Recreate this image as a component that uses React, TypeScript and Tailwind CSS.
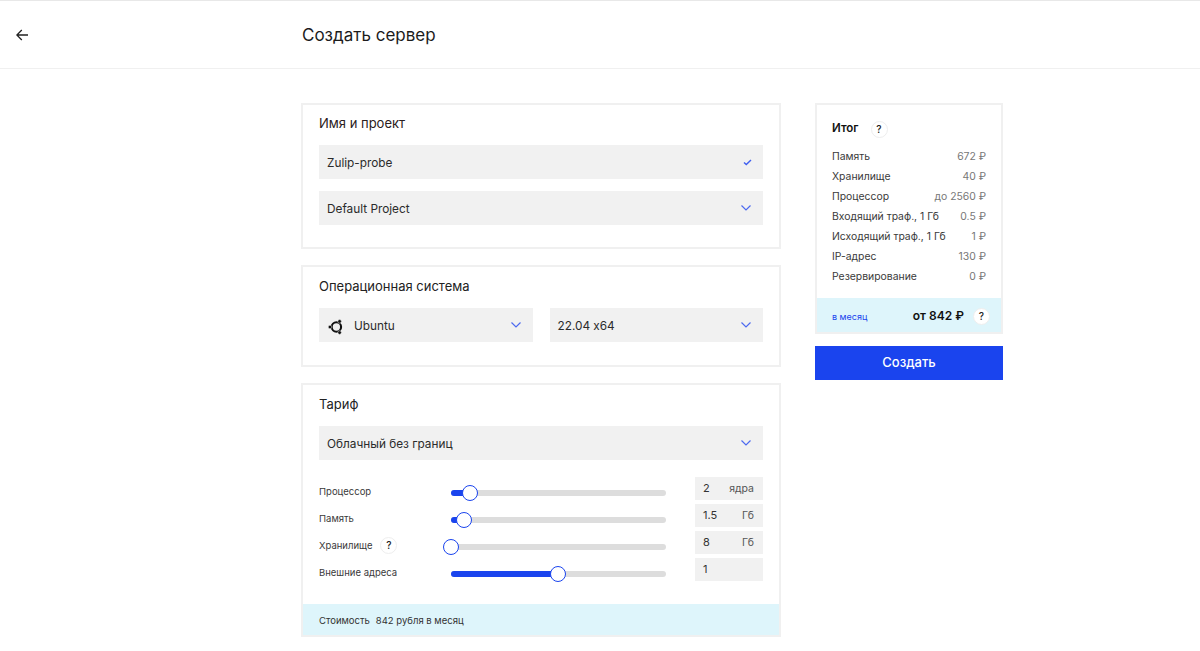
import React from "react";

const Chevron = () => (
  <svg width="12" height="8" viewBox="0 0 12 8" fill="none" className="shrink-0">
    <path d="M1.5 1.5 6 6l4.5-4.5" stroke="#4d6af0" strokeWidth="1.2" />
  </svg>
);

const Check = () => (
  <svg width="9" height="7" viewBox="0 0 9 7" fill="none" className="shrink-0">
    <path d="M1 3.4 3.3 5.6 8 1" stroke="#3f5ff0" strokeWidth="1.4" />
  </svg>
);

const Ubuntu = () => (
  <svg width="16" height="16" viewBox="0 0 16 16" fill="none" className="shrink-0">
    <circle cx="9.4" cy="8" r="4.7" stroke="#111" strokeWidth="2.1" />
    <circle cx="3" cy="8" r="1.8" fill="#111" stroke="#f1f1f1" strokeWidth="0.5" />
    <circle cx="12.6" cy="2.4" r="1.8" fill="#111" stroke="#f1f1f1" strokeWidth="0.5" />
    <circle cx="12.6" cy="13.6" r="1.8" fill="#111" stroke="#f1f1f1" strokeWidth="0.5" />
  </svg>
);

const Help = ({ white }: { white?: boolean }) => (
  <span className={`flex h-[17px] w-[17px] shrink-0 items-center justify-center rounded-full border border-[#eeeeee] text-[10px] font-medium text-[#222] ${white ? "bg-white" : ""}`}>
    ?
  </span>
);

const Select = ({ children, icon }: { children: React.ReactNode; icon?: React.ReactNode }) => (
  <div className="flex h-[34px] items-center justify-between bg-[#f1f1f1] pl-[8px] pr-[11px] text-[11.8px] text-[#2b2b2b] [font-feature-settings:'calt'_0]">
    <div className="flex items-center pt-[3px]">{children}</div>
    {icon ?? <Chevron />}
  </div>
);

const Card = ({ className, children }: { className?: string; children: React.ReactNode }) => (
  <section className={`border-2 border-[#f0f0f0] ${className ?? ""}`}>{children}</section>
);

const sliders = [
  { label: "Процессор", pos: 19, value: "2", unit: "ядра" },
  { label: "Память", pos: 13, value: "1.5", unit: "Гб" },
  { label: "Хранилище", pos: 0, value: "8", unit: "Гб", help: true },
  { label: "Внешние адреса", pos: 107, value: "1", unit: "" },
];

const totals = [
  ["Память", "672 ₽"],
  ["Хранилище", "40 ₽"],
  ["Процессор", "до 2560 ₽"],
  ["Входящий траф., 1 Гб", "0.5 ₽"],
  ["Исходящий траф., 1 Гб", "1 ₽"],
  ["IP-адрес", "130 ₽"],
  ["Резервирование", "0 ₽"],
];

export default function App() {
  return (
    <div className="h-[651px] overflow-hidden bg-white font-['Inter',sans-serif] text-[#222]">
      <header className="flex h-[69px] items-center border-y border-t-[#e8e8e8] border-b-[#f0f0f0] pl-[16px] pt-[1px]">
        <svg width="12" height="12" viewBox="0 0 12 12" fill="none" className="shrink-0">
          <path d="M12 6H1M5.8 1 .8 6l5 5" stroke="#222" strokeWidth="1.3" />
        </svg>
        <h1 className="ml-[274px] text-[17px] font-normal leading-none text-[#1c1c1c]">Создать сервер</h1>
      </header>

      <main className="flex items-start gap-[34px] pl-[301px] pt-[34px]">
        <div className="flex w-[480px] flex-col gap-[16px]">
          <Card className="h-[146px] px-[16px] pt-[10px]">
            <h2 className="h-[16px] text-[13px] font-normal leading-[16px] text-[#2a2020]">Имя и проект</h2>
            <div className="mt-[14px] flex flex-col gap-[12px]">
              <Select icon={<Check />}>Zulip-probe</Select>
              <Select>Default Project</Select>
            </div>
          </Card>

          <Card className="h-[102px] px-[16px] pt-[11px]">
            <h2 className="h-[16px] text-[13px] font-normal leading-[16px] text-[#222]">Операционная система</h2>
            <div className="mt-[14px] grid grid-cols-2 gap-[17px]">
              <Select>
                <Ubuntu />
                <span className="ml-[11px]">Ubuntu</span>
              </Select>
              <Select>22.04 x64</Select>
            </div>
          </Card>

          <Card className="h-[254px]">
            <div className="px-[16px] pt-[11px]">
              <h2 className="h-[16px] text-[13px] font-normal leading-[16px] text-[#222]">Тариф</h2>
              <div className="mt-[14px]">
                <Select>Облачный без границ</Select>
              </div>
              <div className="mt-[17px] flex flex-col gap-[4px]">
                {sliders.map((s) => (
                  <div key={s.label} className="flex h-[23px] items-center">
                    <div className="flex w-[132px] items-center gap-[8px] pt-[5.5px] text-[9.5px] leading-none text-[#3a3a3a]">
                      <span>{s.label}</span>
                      {s.help && <Help />}
                    </div>
                    <div className="relative mt-[8px] h-[6px] w-[215px] rounded-full bg-[#dddddd]">
                      <div className="h-full rounded-full bg-[#1a44ee]" style={{ width: s.pos }} />
                      <div
                        className="absolute top-1/2 h-[16px] w-[16px] -translate-x-1/2 -translate-y-1/2 rounded-full border-[1.5px] border-[#1a44ee] bg-white"
                        style={{ left: s.pos }}
                      />
                    </div>
                    <div className="ml-[29px] flex h-[23px] w-[68px] items-center justify-between bg-[#f1f1f1] pl-[8px] pr-[9px] text-[11px] text-[#333]">
                      <span>{s.value}</span>
                      <span className="text-[10.5px] text-[#555]">{s.unit}</span>
                    </div>
                  </div>
                ))}
              </div>
            </div>
            <div className="mt-[23px] flex h-[31px] items-center bg-[#def5fb] px-[16px] pt-[3px] text-[9.5px] text-[#333]">
              <span>Стоимость</span>
              <span className="ml-[6px]">842 рубля в месяц</span>
            </div>
          </Card>
        </div>

        <aside className="flex w-[188px] flex-col gap-[12px]">
          <Card className="h-[231px]">
            <div className="h-[193px] pl-[15px] pr-[15px] pt-[15px]">
              <div className="flex h-[18px] items-center gap-[12px]">
                <span className="text-[11.5px] font-semibold text-[#111]">Итог</span>
                <Help />
              </div>
              <div className="mt-[9px] flex flex-col">
                {totals.map(([name, price]) => (
                  <div key={name} className="flex h-[20px] items-center justify-between text-[10.4px] text-[#3a3a3a]">
                    <span>{name}</span>
                    <span className="text-[#777]">{price}</span>
                  </div>
                ))}
              </div>
            </div>
            <div className="flex h-[34px] items-center justify-between bg-[#def5fb] pl-[15px] pr-[11px] pt-[2px]">
              <span className="mt-[1px] text-[9px] text-[#1a44ee]">в месяц</span>
              <div className="flex items-center gap-[9px]">
                <span className="text-[12px] font-semibold text-[#111]">от 842 ₽</span>
                <Help white />
              </div>
            </div>
          </Card>
          <button className="flex h-[34px] items-center justify-center bg-[#1a44ee] text-[13px] font-medium text-white">
            Создать
          </button>
        </aside>
      </main>
    </div>
  );
}
